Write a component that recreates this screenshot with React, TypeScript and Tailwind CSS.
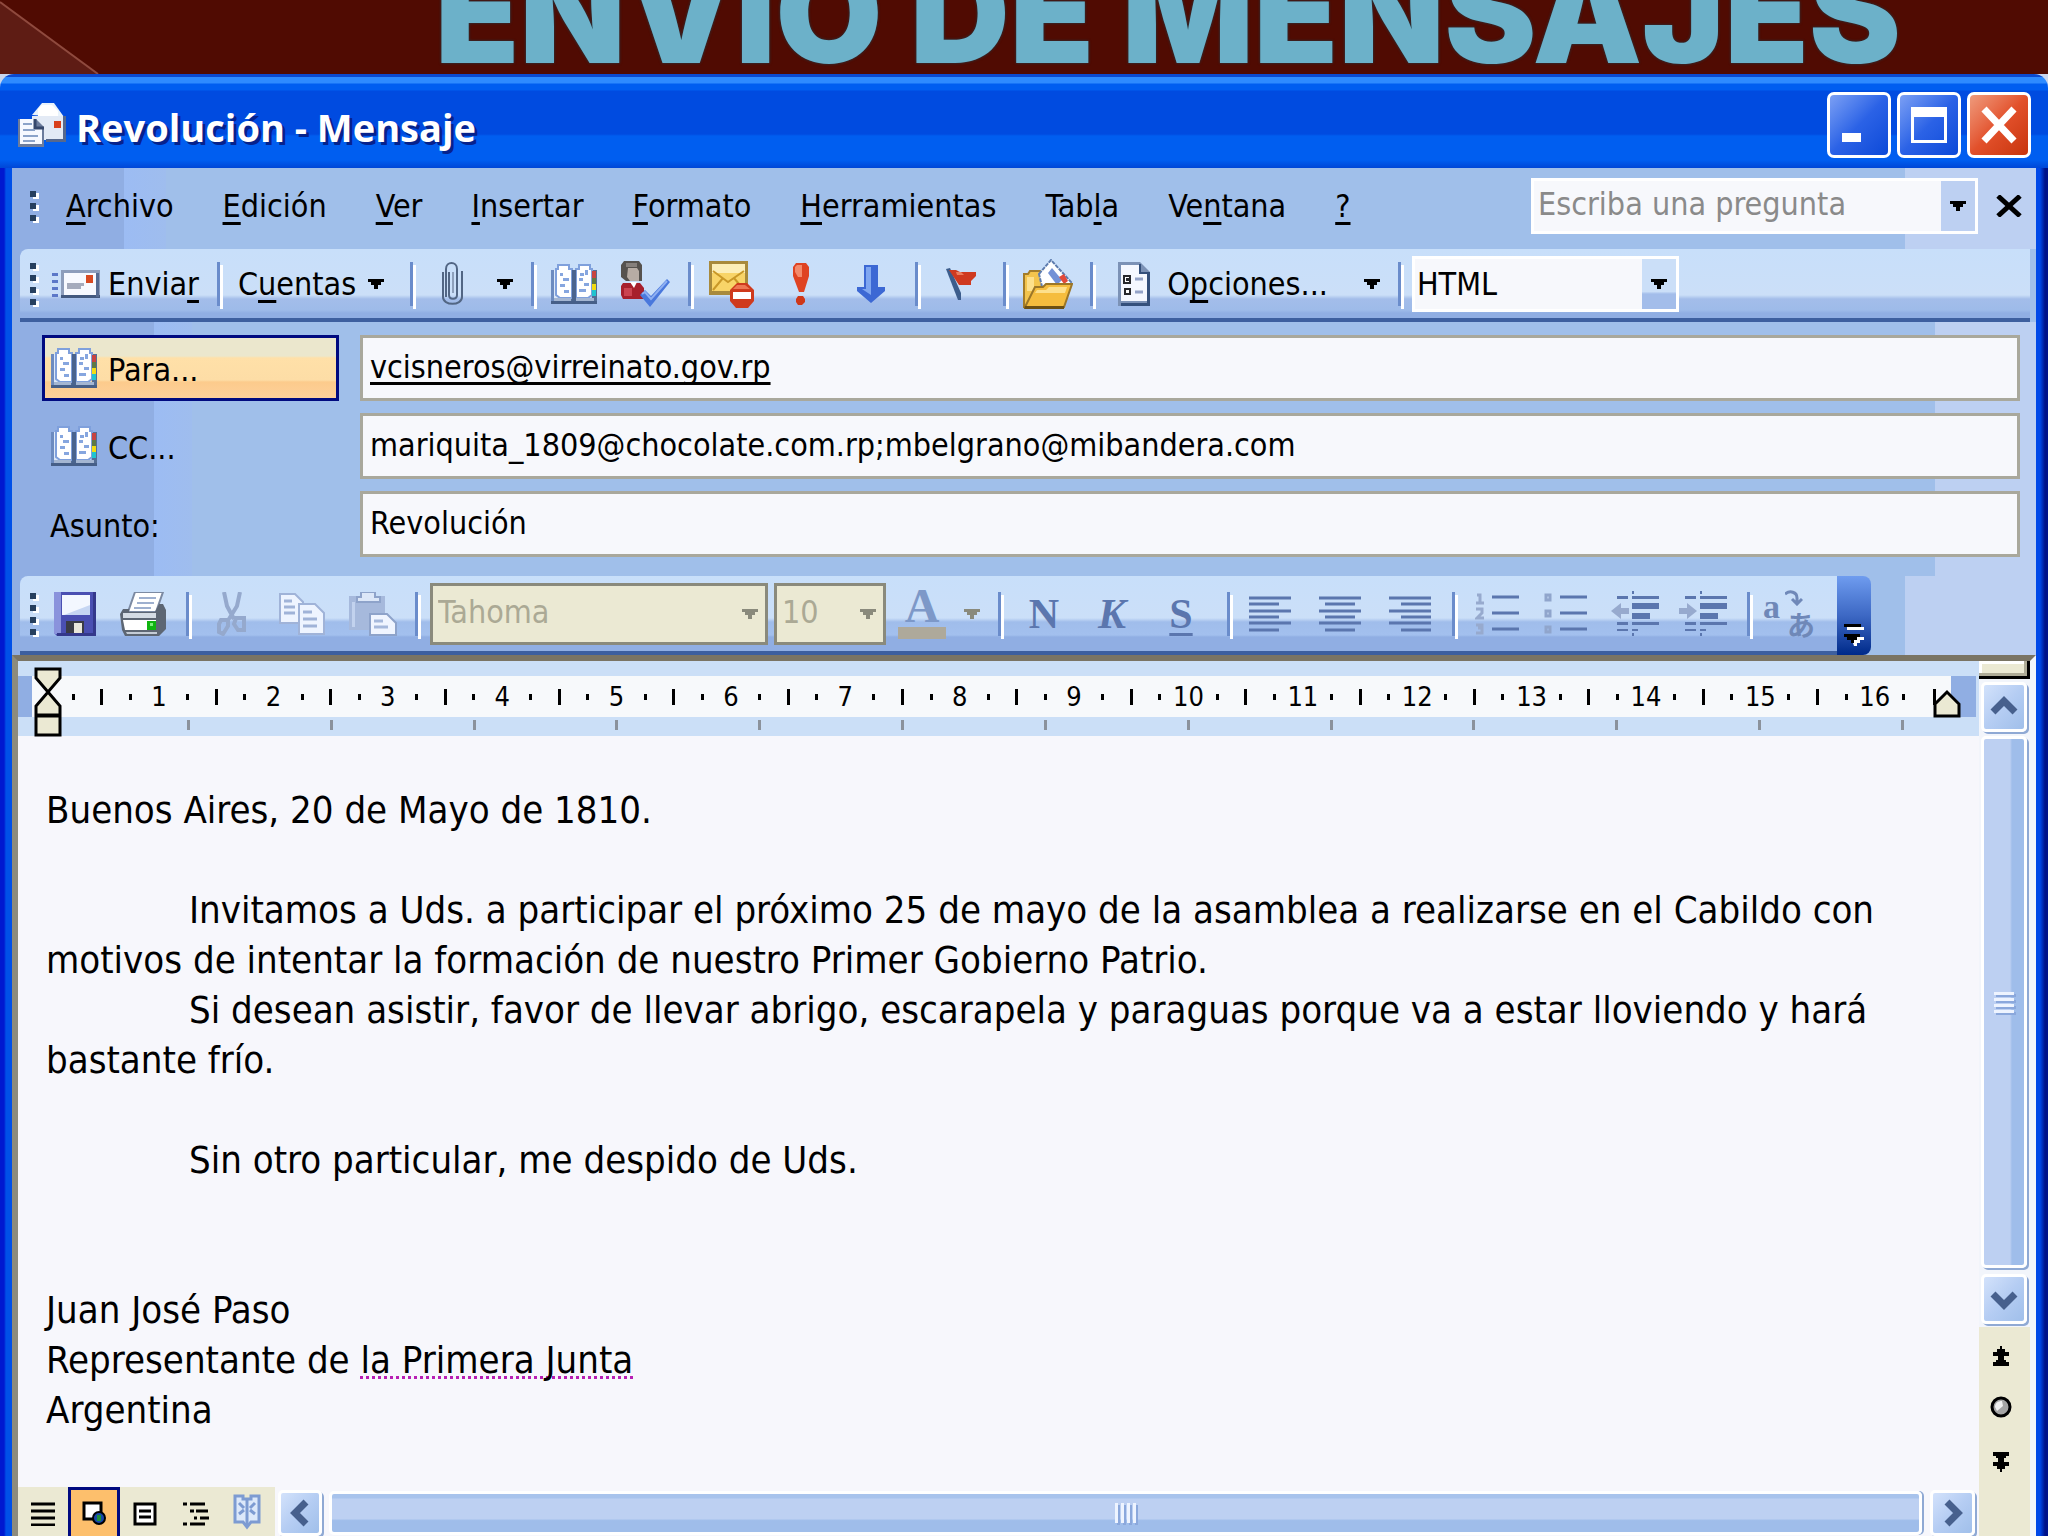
import type { ReactNode } from "react";

/** Outlook 2003 message window on top of a presentation slide */

const uiFont = "font-['DejaVu_Sans_Condensed','Noto_Sans',sans-serif]";

// ---------- small parts ----------

/** Mnemonic letter */
function M({ children }: { children: ReactNode }) {
  return (
    <span className="underline decoration-[3px] underline-offset-[5px] [text-decoration-skip-ink:none]">
      {children}
    </span>
  );
}

function Grip({ dots }: { dots: number }) {
  return (
    <div className="flex w-3 shrink-0 flex-col gap-[6px]">
      {Array.from({ length: dots }, (_, i) => (
        <span key={i} className="size-[6px] bg-[#27405f] shadow-[3px_2px_0_#fff]" />
      ))}
    </div>
  );
}

function Separator() {
  return <div className="h-[44px] w-[3px] shrink-0 bg-[#6a8ccb] shadow-[3px_3px_0_#fff]" />;
}

function Arrow({ className = "text-black" }: { className?: string }) {
  return (
    <svg viewBox="0 0 16 10" className={`h-[10px] w-4 shrink-0 ${className}`} fill="currentColor">
      <path d="M0 0h16v3h-3v3h-3v4H6V6H3V3H0z" />
    </svg>
  );
}

function IconButton({ label, className = "", children }: { label: string; className?: string; children: ReactNode }) {
  return (
    <button type="button" aria-label={label} className={`flex shrink-0 items-center justify-center ${className}`}>
      {children}
    </button>
  );
}

// ---------- icons ----------

function AppIcon() {
  return (
    <svg viewBox="0 0 48 48" className="size-12 shrink-0">
      <path d="M14 14 24 2h12l10 14z" fill="#e8f2fb" />
      <path d="M20 16V8l4-4h10l6 6v8z" fill="#fff" />
      <path d="M14 15h33v24H14z" fill="#e3eaf5" />
      <path d="M45 15h3v26H28v-3h17z" fill="#56688c" />
      <path d="M36 20h7v7h-7z" fill="#d8401c" />
      <path d="M0 18h18l8 8v20H0z" fill="#6c7c9c" />
      <path d="M2 18h15v9h7v16H2z" fill="#f6f9ff" />
      <path d="M17 18v9h9" fill="none" stroke="#35476b" strokeWidth="3" />
      <path d="M5 23h9M5 29h12M5 35h15M5 40h12" stroke="#8ba3c9" strokeWidth="2" />
    </svg>
  );
}

function SendIcon() {
  return (
    <svg viewBox="0 0 48 28" className="h-7 w-12 shrink-0">
      <path d="M0 3h6v3H0zM0 10h6v3H0zM0 17h6v3H0zM0 24h6v3H0z" fill="#5c78c8" />
      <path d="M9 0h39v28H9z" fill="#8d9dbb" />
      <path d="M12 25h36v3H9v-3z" fill="#43597f" />
      <path d="M12 3h32v22H12z" fill="#f7f9ff" />
      <path d="M44 3h3v24h-3z" fill="#566b92" />
      <path d="M34 5h7v8h-7z" fill="#d84a22" />
      <path d="M15 13h17v3h-3v3H15z" fill="#a5abbd" />
    </svg>
  );
}

function BookIcon() {
  return (
    <svg viewBox="0 0 46 40" className="h-10 w-[46px] shrink-0">
      <path d="M0 6h5v28h36V6h5v34H0z" fill="#546d94" />
      <path d="M2 6h38v28H2z" fill="#dce8f8" />
      <path d="M0 6h3v34H0z" fill="#6c8bc0" />
      <path d="M7 1h11v4h3v29H9l-4-3V5h2z" fill="#fff" stroke="#7fa0dc" strokeWidth="2" />
      <path d="M39 1H28v4h-3v29h12l4-3V5h-2z" fill="#fff" stroke="#7fa0dc" strokeWidth="2" />
      <path d="M21 6h4v32h-4z" fill="#4a648e" />
      <path d="M9 9h3v3H9zM12 14h6v3h-6zM9 20h5v3H9zM13 26h5v3h-5zM29 9h4v3h-4zM34 6h3v5h-3zM28 14h4v3h-4zM33 19h5v3h-5zM28 25h7v3h-7z" fill="#86a6df" />
      <path d="M41 7h4v7h-4z" fill="#c74340" />
      <path d="M41 14h4v6h-4z" fill="#5f7a44" />
      <path d="M41 20h4v6h-4z" fill="#f3dc12" />
      <path d="M41 26h4v6h-4z" fill="#20c4cf" />
      <path d="M3 34h17v3H3zM25 34h18v3H25z" fill="#a4b6d2" />
      <path d="M0 37h46v3H0z" fill="#465f88" />
    </svg>
  );
}

function ClipIcon() {
  return (
    <svg viewBox="0 0 24 44" className="h-11 w-6 shrink-0" fill="none" stroke="#526684" strokeWidth="2">
      <path d="M8 10v23c0 5 8 5 8 0V7c0-8-11-8-11 0v28" />
      <path d="M2 10v25c0 9 19 9 19 0V9" />
      <path d="M12 10v21" stroke="#8ea0bb" />
    </svg>
  );
}

function CheckNamesIcon() {
  return (
    <svg viewBox="0 0 50 46" className="h-[46px] w-[50px] shrink-0">
      <path d="M3 0h15l3 4v16H5L0 16V4z" fill="#56524e" />
      <path d="M7 7h9l2 3v10H9l-3-4z" fill="#b7aca4" />
      <path d="M5 2h11v4H5z" fill="#86807c" />
      <path d="M2 22h17l4 5v11H2l-2-4v-9z" fill="#a71f2c" />
      <path d="M9 21h7l-3 6z" fill="#fff" />
      <path d="M3 27h8v8H3z" fill="#cb4350" />
      <path d="m19 34 5-5 6 6L46 18l3 3-20 25z" fill="#4a78dc" />
      <path d="m21 33 3-2 6 7 16-18" fill="none" stroke="#8fb0f2" strokeWidth="2" />
    </svg>
  );
}

function MailDenyIcon() {
  return (
    <svg viewBox="0 0 46 48" className="h-12 w-[46px] shrink-0">
      <path d="M0 1h39v34H0z" fill="#a88a3c" />
      <path d="M3 4h33v27H3z" fill="#f8d468" />
      <path d="M3 4h33v9H3z" fill="#fceeb8" />
      <path d="m4 11 15 11 16-11M4 30l10-12M35 30 25 18" fill="none" stroke="#c99828" strokeWidth="2" />
      <path d="M28 23h10l7 7v11l-6 7H27l-6-7V30z" fill="#cf3a1d" />
      <path d="M28 25h8l5 4H24z" fill="#ee7653" />
      <path d="M24 32h18v7H24z" fill="#fff" />
    </svg>
  );
}

function ImportantIcon() {
  return (
    <svg viewBox="0 0 16 42" className="h-[42px] w-4 shrink-0">
      <path d="M3 0h10l3 4v9l-5 16H6L0 13V4z" fill="#df4322" />
      <path d="M4 2h5v12H5L2 9V4z" fill="#f38a6b" />
      <path d="M5 33h5l2 3v3l-3 3H5l-2-3v-3z" fill="#cf3718" />
    </svg>
  );
}

function LowIcon() {
  return (
    <svg viewBox="0 0 28 38" className="h-[38px] w-7 shrink-0">
      <path d="M7 0h14v22h7v4L14 38 0 26v-4h7z" fill="#3c68d4" />
      <path d="M9 2h5v28l-9-6h4z" fill="#7fa6f0" />
    </svg>
  );
}

function FlagIcon() {
  return (
    <svg viewBox="0 0 32 34" className="h-[34px] w-8 shrink-0">
      <path d="m1 2 4-1 11 25v7h-3z" fill="#3c5d8c" />
      <path d="M4 3h7l4 2h16v4l-5 5v4H14z" fill="#cf3a20" />
      <path d="M11 5h5l3 3h-7z" fill="#ee7d5c" />
    </svg>
  );
}

function FolderIcon() {
  return (
    <svg viewBox="0 0 50 50" className="size-[50px] shrink-0">
      <path d="M1 15h4l2-3h10l3 3v33H1z" fill="#f3c44d" stroke="#a37c29" strokeWidth="2" />
      <path d="M4 18h7v14H4z" fill="#fde08c" />
      <path d="M16 15 28 1l20 22-6 9H20z" fill="#fff" stroke="#5e7cae" strokeWidth="2" strokeDasharray="4 1" />
      <path d="m25 14 4-5 10 12-5 5z" fill="#7391d6" />
      <path d="m36 18 5-3 4 7-4 3z" fill="#e2493a" />
      <path d="M12 28h8l3-3h26l-8 23H2z" fill="#f5bd3e" stroke="#9b7628" strokeWidth="2" />
      <path d="M14 31h9l3-3h18l-2 6H12z" fill="#fde08c" />
      <path d="M2 47h39v3H1z" fill="#6c5013" />
    </svg>
  );
}

function OptionsIcon() {
  return (
    <svg viewBox="0 0 32 44" className="h-11 w-8 shrink-0">
      <path d="M0 0h22l10 10v34H0z" fill="#7c92b6" />
      <path d="M3 3h18v8h8v28H3z" fill="#f5f8ff" />
      <path d="M29 10h3v34H3v-3h26zM21 2h2v8h8v2H21z" fill="#34507b" />
      <path d="M6 14h6v7H6zM7 27h5v5H7z" fill="#fff" stroke="#27282c" strokeWidth="2" />
      <path d="M8 16h3v3H8z" fill="#27282c" />
      <path d="M17 17h8M17 30h8" stroke="#94a3c8" strokeWidth="3" />
    </svg>
  );
}

function SaveIcon() {
  return (
    <svg viewBox="0 0 42 44" className="h-11 w-[42px] shrink-0">
      <path d="M0 0h42v44H3l-3-3z" fill="#4a4fb2" />
      <path d="M0 0h7v42H0z" fill="#8a93dc" />
      <path d="M8 3h28v20H8z" fill="#f3f7ff" />
      <path d="M36 3v20H10l26-10z" fill="#c6d6f3" />
      <path d="M12 29h18v13H12z" fill="#3a3b45" />
      <path d="M20 31h8v10h-8z" fill="#e9e6da" />
      <path d="M39 0h3v44H3v-3h36z" fill="#34388b" />
    </svg>
  );
}

function PrintIcon() {
  return (
    <svg viewBox="0 0 46 44" className="h-11 w-[46px] shrink-0">
      <path d="M15 0h28l-7 20H8z" fill="#fff" stroke="#7c8aa2" strokeWidth="2" />
      <path d="M19 6h17M17 11h17M14 16h17" stroke="#9eb0cf" strokeWidth="2" />
      <path d="M3 17h6v3h26l4-8h4l3 6v19l-7 7H5l-3-6-2-16z" fill="#5d6673" />
      <path d="M3 21h33v5H3z" fill="#d5dce4" />
      <path d="M3 28h33v10H5z" fill="#fff" />
      <path d="M27 29h9v9h-9z" fill="#10b410" />
      <path d="M30 31h3v3h-3z" fill="#7df07a" />
      <path d="M6 40h31v2H7z" fill="#c4ccd6" />
    </svg>
  );
}

function CutIcon() {
  return (
    <svg viewBox="0 0 30 44" className="h-11 w-[30px] shrink-0" fill="none" stroke="#95a9cd" strokeWidth="3">
      <path d="m7 0 3 14 7 13M23 0l-3 14-8 13" strokeWidth="4" />
      <path d="M4 28h7v6l-5 8-4-2v-8zM19 26h8v12h-6l-4-6z" strokeWidth="4" />
    </svg>
  );
}

function CopyIcon() {
  return (
    <svg viewBox="0 0 46 42" className="h-[42px] w-[46px] shrink-0" fill="#eef4ff" stroke="#a0b3d8" strokeWidth="2">
      <path d="M1 1h15l8 8v21H1z" />
      <path d="M5 8h8M5 14h11M5 20h11" strokeWidth="3" />
      <path d="M20 11h16l9 9v21H20z" />
      <path d="M24 19h9M24 26h14M24 33h14" strokeWidth="3" />
    </svg>
  );
}

function PasteIcon() {
  return (
    <svg viewBox="0 0 48 44" className="h-11 w-12 shrink-0">
      <path d="M0 4h36v34H0z" fill="#a6b9dc" />
      <path d="M12 0h14v5h5v5H8V5h4z" fill="#dce7f8" stroke="#8ea3ca" strokeWidth="2" />
      <path d="M3 10h3v25H3z" fill="#c2d2ee" />
      <path d="M21 22h17l9 9v12H21z" fill="#f0f5ff" stroke="#8ea3ca" strokeWidth="2" />
      <path d="M25 29h9M25 35h14" stroke="#a6b9dc" strokeWidth="3" />
    </svg>
  );
}

function AlignIcon({ d }: { d: string }) {
  return (
    <svg viewBox="0 0 44 36" className="h-9 w-11 shrink-0" stroke="#5b76ae" strokeWidth="3">
      <path d={d} />
    </svg>
  );
}

function ListIcon({ numbered = false }: { numbered?: boolean }) {
  return (
    <svg viewBox="0 0 44 44" className="size-11 shrink-0" fill="none" stroke="#5b76ae" strokeWidth="3">
      <path d="M17 5h27M17 21h27M17 37h27" />
      {numbered ? (
        <path d="M2 3h3v8M1 11h8M1 17h6v4l-5 5h7M1 33h6v3H3h4v5H1" stroke="#97aace" strokeWidth="3" />
      ) : (
        <path d="M3 3h4v5H3zM3 19h4v5H3zM3 35h4v5H3z" stroke="#90a5cc" strokeWidth="3" />
      )}
    </svg>
  );
}

function IndentIcon({ right = false }: { right?: boolean }) {
  return (
    <svg viewBox="0 0 48 46" className="h-[46px] w-12 shrink-0" fill="#5b76ae">
      <path d="M21 5h27v3H21zM21 12h27v6H21zM21 22h18v6H21zM21 31h27v3H21zM21 38h6v2h-6z" />
      <path d="M6 5h11v3H6zM6 31h11v3H6zM6 38h11v2H6zM21 0h2v3h-2zM21 42h2v3h-2z" />
      {right ? (
        <path d="M0 17h8v-5l10 8-10 8v-5H0z" fill="#97aace" />
      ) : (
        <path d="M18 17h-8v-5L0 20l10 8v-5h8z" fill="#97aace" />
      )}
    </svg>
  );
}

function LanguageIcon() {
  return (
    <div className="relative h-12 w-12 shrink-0 text-[#6f88b8]">
      <span className="absolute -left-1 -top-1 font-['Liberation_Serif',serif] text-[34px] font-bold leading-[42px]">
        a
      </span>
      <span className="absolute bottom-0 right-0 font-['Noto_Sans_CJK_JP',sans-serif] text-[28px] font-bold leading-[28px]">
        あ
      </span>
      <svg viewBox="0 0 18 16" className="absolute right-3 top-0 h-4 w-[18px]" fill="none" stroke="currentColor" strokeWidth="3">
        <path d="M0 4c5-4 12-2 12 4v5M7 9l5 5 5-5" />
      </svg>
    </div>
  );
}

// ---------- title bar ----------

function CaptionButton({ label, close = false, children }: { label: string; close?: boolean; children: ReactNode }) {
  return (
    <button
      type="button"
      aria-label={label}
      className={`flex h-[66px] w-[64px] items-center justify-center rounded-[7px] border-[3px] border-white ${
        close
          ? "bg-linear-to-br from-[#ee9a7c] via-[#e2502a] to-[#c8340a]"
          : "bg-linear-to-br from-[#7c9ff4] via-[#2b62e6] to-[#0a49d8]"
      }`}
    >
      <svg viewBox="0 0 40 40" className="size-10">
        {children}
      </svg>
    </button>
  );
}

function TitleBar() {
  return (
    <header className="flex h-[94px] shrink-0 items-center rounded-t-[14px] bg-[linear-gradient(#0b49cf_0,#0b49cf_3px,#2e8bff_3px,#2e8bff_9px,#005ef0_10px,#005ef0_16px,#004be0_17px,#004be0_60px,#005ef0_62px,#005ef0_86px,#0046d6_94px)] pl-[18px] pr-[17px] pt-2">
      <AppIcon />
      <h1 className="ml-[10px] pt-1 font-['Open_Sans',sans-serif] text-[38px] font-bold leading-none text-white [text-shadow:3px_3px_0_#06228c]">
        Revolución - Mensaje
      </h1>
      <div className="ml-auto flex gap-[6px]">
        <CaptionButton label="Minimizar">
          <path d="M3 28h19v9H3z" fill="#fff" />
        </CaptionButton>
        <CaptionButton label="Maximizar">
          <path d="M2 2h36v36H2zM5 12v23h30V12z" fill="#fff" fillRule="evenodd" />
        </CaptionButton>
        <CaptionButton label="Cerrar" close>
          <path d="m5 4 30 32M35 4 5 36" stroke="#fff" strokeWidth="7" />
        </CaptionButton>
      </div>
    </header>
  );
}

// ---------- bars ----------

const menus: [string, string, string][] = [
  ["", "A", "rchivo"],
  ["", "E", "dición"],
  ["", "V", "er"],
  ["", "I", "nsertar"],
  ["", "F", "ormato"],
  ["", "H", "erramientas"],
  ["Tab", "l", "a"],
  ["Ve", "n", "tana"],
  ["", "?", ""],
];

function MenuBar() {
  return (
    <nav className="flex h-[81px] shrink-0 items-center bg-[linear-gradient(to_right,#90aee3_112px,#9cbcf3_112px,#9fbdee_154px,#a0bfea_154px,#a0bfea_1893px,#bdd0f2_1893px)] pb-[6px] pl-[18px] pr-[14px]">
      <Grip dots={3} />
      <ul className="ml-6 flex gap-[49px]">
        {menus.map(([before, key, after]) => (
          <li key={before + key + after}>
            <button type="button">
              {before}
              <M>{key}</M>
              {after}
            </button>
          </li>
        ))}
      </ul>
      <div className="ml-auto flex h-14 w-[447px] items-stretch border-[3px] border-white bg-[#f7f8fc]">
        <input
          aria-label="Escriba una pregunta"
          placeholder="Escriba una pregunta"
          className="min-w-0 flex-1 pb-1 pl-1 placeholder:text-[#8a8a8a] focus:outline-none"
        />
        <button type="button" aria-label="Preguntas recientes" className="flex w-[34px] items-center justify-center bg-[#bdd0f2]">
          <Arrow />
        </button>
      </div>
      <IconButton label="Cerrar mensaje" className="ml-[18px]">
        <svg viewBox="0 0 26 22" className="h-[22px] w-[26px]" stroke="#000" strokeWidth="5">
          <path d="m2 1 22 20M24 1 2 21" />
        </svg>
      </IconButton>
    </nav>
  );
}

function SendToolbar() {
  return (
    <div className="ml-2 shrink-0 pr-[6px]">
      <div
        role="toolbar"
        aria-label="Correo"
        className="flex h-[73px] items-center rounded-tl-lg border-b-4 border-[#3d5f9f] bg-[linear-gradient(#c8dffa_0,#cbdff8_46px,#a3bdea_50px,#9ebbe9_61px,#90aee3_64px)] pl-[10px]"
      >
        <Grip dots={4} />
        <button type="button" className="ml-[10px] flex items-center gap-2">
          <SendIcon />
          <span>
            Envia<M>r</M>
          </span>
        </button>
        <div className="ml-[18px]">
          <Separator />
        </div>
        <button type="button" className="ml-[18px] flex items-center gap-3">
          <span>
            C<M>u</M>entas
          </span>
          <Arrow />
        </button>
        <div className="ml-[26px] flex items-center gap-[28px]">
          <Separator />
          <button type="button" aria-label="Insertar archivo" className="flex items-center gap-8">
            <ClipIcon />
            <Arrow />
          </button>
        </div>
        <div className="ml-[18px] flex items-center">
          <Separator />
          <IconButton label="Libreta de direcciones" className="ml-[17px]">
            <BookIcon />
          </IconButton>
          <IconButton label="Comprobar nombres" className="ml-6">
            <CheckNamesIcon />
          </IconButton>
        </div>
        <div className="ml-[17px] flex items-center">
          <Separator />
          <IconButton label="Permisos" className="ml-[18px]">
            <MailDenyIcon />
          </IconButton>
          <IconButton label="Importancia alta" className="ml-[38px]">
            <ImportantIcon />
          </IconButton>
          <IconButton label="Importancia baja" className="ml-[48px]">
            <LowIcon />
          </IconButton>
        </div>
        <div className="ml-[30px] flex items-center">
          <Separator />
          <IconButton label="Marcar mensaje" className="ml-[27px]">
            <FlagIcon />
          </IconButton>
        </div>
        <div className="ml-[26px] flex items-center">
          <Separator />
          <IconButton label="Carpeta" className="ml-[17px]">
            <FolderIcon />
          </IconButton>
        </div>
        <div className="ml-[17px] flex items-center">
          <Separator />
          <button type="button" className="ml-[25px] flex items-center gap-[17px]">
            <OptionsIcon />
            <span>
              O<M>p</M>ciones...
            </span>
          </button>
          <IconButton label="Más opciones" className="ml-9">
            <Arrow />
          </IconButton>
        </div>
        <div className="ml-[18px] flex items-center gap-[11px]">
          <Separator />
          <div className="relative h-14 w-[267px]">
            <select
              aria-label="Formato del mensaje"
              className="size-full appearance-none border-[3px] border-white bg-[#f7f8fc] pl-[2px] focus:outline-none"
            >
              <option>HTML</option>
              <option>Texto sin formato</option>
            </select>
            <span className="pointer-events-none absolute inset-y-[3px] right-[3px] flex w-[34px] items-center justify-center bg-[linear-gradient(#cbdff8_65%,#a3bdea_70%)]">
              <Arrow />
            </span>
          </div>
        </div>
      </div>
    </div>
  );
}

const fieldClass =
  "h-[66px] min-w-0 flex-1 border-[3px] border-[#a9a89c] bg-[#f7f8fc] pl-[7px] pb-[2px] focus:outline-none";

function Fields() {
  return (
    <div className="flex shrink-0 flex-col gap-3 bg-[linear-gradient(to_right,#90aee3_142px,#9cbcf3_142px,#9fbdee_180px,#a0bfea_180px,#a0bfea_1923px,#bdd0f2_1923px)] pb-[19px] pl-[30px] pr-4 pt-[13px]">
      <div className="flex">
        <button
          type="button"
          className="mr-[21px] flex w-[297px] items-center gap-[11px] border-[3px] border-[#000a80] bg-[linear-gradient(#ebe7cd_18px,#ffe0a8_20px,#fddda6_42px,#fccb8c_44px,#fdd09a_60px)] pl-[6px]"
        >
          <BookIcon />
          <span className="pt-1">Para...</span>
        </button>
        <input
          aria-label="Para"
          defaultValue="vcisneros@virreinato.gov.rp"
          className={`${fieldClass} underline decoration-[3px] underline-offset-4 [text-decoration-skip-ink:none]`}
        />
      </div>
      <div className="flex">
        <button type="button" className="mr-[21px] flex w-[297px] items-center gap-[11px] pl-[9px]">
          <BookIcon />
          <span className="pt-1">CC...</span>
        </button>
        <input aria-label="CC" defaultValue="mariquita_1809@chocolate.com.rp;mbelgrano@mibandera.com" className={fieldClass} />
      </div>
      <div className="flex items-center">
        <label htmlFor="subject" className="mr-[21px] w-[297px] pl-2 pt-1">
          Asunto:
        </label>
        <input id="subject" defaultValue="Revolución" className={fieldClass} />
      </div>
    </div>
  );
}

function DisabledSelect({ label, value, className }: { label: string; value: string; className: string }) {
  return (
    <div className={`relative h-[62px] shrink-0 ${className}`}>
      <select
        aria-label={label}
        disabled
        className="size-full appearance-none border-[3px] border-[#8a8a7c] bg-[#ebe9d3] pb-1 pl-[5px] text-[#aba995] opacity-100"
      >
        <option>{value}</option>
      </select>
      <span className="pointer-events-none absolute inset-y-0 right-[10px] flex items-center">
        <Arrow className="text-[#8a8a7c]" />
      </span>
    </div>
  );
}

function FormatToolbar() {
  return (
    <div className="flex h-[79px] shrink-0 bg-[linear-gradient(to_right,#90aee3_112px,#a0bfea_112px,#a0bfea_1893px,#bdd0f2_1893px)] pl-2">
      <div
        role="toolbar"
        aria-label="Formato"
        className="flex items-center rounded-tl-lg border-b-4 border-[#3d5f9f] bg-[linear-gradient(#c8dffa_0,#cbdff8_42px,#a0bdeb_46px,#a3c0ee_59px,#90aee3_61px)] pl-[10px]"
      >
        <Grip dots={4} />
        <IconButton label="Guardar" className="ml-3">
          <SaveIcon />
        </IconButton>
        <IconButton label="Imprimir" className="ml-6">
          <PrintIcon />
        </IconButton>
        <div className="ml-5 flex items-center">
          <Separator />
          <IconButton label="Cortar" className="ml-[28px]">
            <CutIcon />
          </IconButton>
          <IconButton label="Copiar" className="ml-8">
            <CopyIcon />
          </IconButton>
          <IconButton label="Pegar" className="ml-6">
            <PasteIcon />
          </IconButton>
        </div>
        <div className="ml-[18px] flex items-center">
          <Separator />
          <DisabledSelect label="Fuente" value="Tahoma" className="ml-3 w-[338px]" />
          <DisabledSelect label="Tamaño de fuente" value="10" className="ml-[6px] w-[112px]" />
        </div>
        <IconButton label="Color de fuente" className="ml-3 gap-[18px]">
          <span className="w-12 border-b-[12px] border-[#aea99b] pb-1 text-center font-['Liberation_Serif',serif] text-[48px] font-bold leading-[34px] text-[#7d98c8]">
            A
          </span>
          <Arrow className="text-[#8a8a7c]" />
        </IconButton>
        <div className="ml-[18px] flex items-center font-['Liberation_Serif',serif] text-[42px] font-bold leading-[42px] text-[#5b76ae]">
          <Separator />
          <button type="button" aria-label="Negrita" className="ml-[26px] w-[34px]">
            N
          </button>
          <button type="button" aria-label="Cursiva" className="ml-8 w-[38px] italic">
            K
          </button>
          <button
            type="button"
            aria-label="Subrayado"
            className="ml-9 w-7 underline decoration-[3px] underline-offset-[5px]"
          >
            S
          </button>
        </div>
        <div className="ml-8 flex items-center gap-[26px]">
          <Separator />
          <IconButton label="Alinear a la izquierda" className="-ml-2">
            <AlignIcon d="M1 2h42M1 8h30M1 15h42M1 21h30M1 27h42M1 34h30" />
          </IconButton>
          <IconButton label="Centrar">
            <AlignIcon d="M1 2h42M7 8h30M1 15h42M7 21h30M1 27h42M7 34h30" />
          </IconButton>
          <IconButton label="Alinear a la derecha">
            <AlignIcon d="M1 2h42M13 8h30M1 15h42M13 21h30M1 27h42M13 34h30" />
          </IconButton>
        </div>
        <div className="ml-5 flex items-center gap-6">
          <Separator />
          <IconButton label="Numeración" className="-ml-1">
            <ListIcon numbered />
          </IconButton>
          <IconButton label="Viñetas">
            <ListIcon />
          </IconButton>
          <IconButton label="Reducir sangría">
            <IndentIcon />
          </IconButton>
          <IconButton label="Aumentar sangría" className="-ml-1">
            <IndentIcon right />
          </IconButton>
        </div>
        <div className="ml-5 flex items-center gap-[17px] pr-[22px]">
          <Separator />
          <IconButton label="Idioma">
            <LanguageIcon />
          </IconButton>
        </div>
      </div>
      <button
        type="button"
        aria-label="Opciones de barra de herramientas"
        className="flex w-[34px] items-end justify-center rounded-r-lg bg-linear-to-b from-[#6f9cef] via-[#3d68c4] to-[#00298a] pb-[9px]"
      >
        <svg viewBox="0 0 20 22" className="h-[22px] w-5">
          <path d="M3 3h17v3H3zM7 13h13v3h-4v3h-3v3h-3z" fill="#fff" />
          <path d="M0 0h17v3H0zM0 10h16v3h-3v3h-3v3H7v-3H3v-3H0z" fill="#000" />
        </svg>
      </button>
    </div>
  );
}

// ---------- ruler ----------

const centimeters = Array.from({ length: 16 }, (_, i) => i + 1);

function Ruler() {
  return (
    <div className="relative h-[75px] shrink-0 bg-[#cbdff7] pr-[3px] pt-[15px]">
      <div className="flex h-[41px] items-center border-l-[14px] border-r-[25px] border-[#90aee3] bg-[#f7f9fb] pl-[27px] text-[27px] leading-none">
        <div className="flex flex-1">
          {centimeters.map((n) => (
            <div key={n} className="grid flex-1 grid-cols-4 items-center justify-items-center">
              <span className="h-[6px] w-[3px] bg-black" />
              <span className="h-4 w-[3px] bg-black" />
              <span className="h-[6px] w-[3px] bg-black" />
              <span>{n}</span>
            </div>
          ))}
        </div>
        <div className="flex w-[62px] items-center gap-7 pl-[13px]">
          <span className="h-[6px] w-[3px] bg-black" />
          <span className="h-4 w-[3px] bg-black" />
        </div>
      </div>
      {/* default tab stops */}
      <div className="mr-[72px] flex pl-[29px] pt-[3px]">
        {Array.from({ length: 13 }, (_, i) => (
          <span key={i} className="h-[10px] flex-1 border-r-[3px] border-[#8b929c]" />
        ))}
      </div>
      <svg viewBox="0 0 28 70" className="absolute left-4 top-[6px] h-[70px] w-7" fill="#ebe9d3" stroke="#000" strokeWidth="3">
        <path d="M2 2h24v9L14 25 2 11zM14 25l12 14v9H2v-9zM2 49h24v19H2z" />
      </svg>
      <svg viewBox="0 0 28 30" className="absolute right-[18px] top-[28px] h-[30px] w-7" fill="#ebe9d3" stroke="#000" strokeWidth="3">
        <path d="M2 15 14 3l12 12v12H2z" />
      </svg>
    </div>
  );
}

// ---------- message ----------

function Message() {
  return (
    <div
      role="textbox"
      aria-multiline
      aria-label="Mensaje"
      contentEditable
      suppressContentEditableWarning
      spellCheck={false}
      className="min-h-0 flex-1 overflow-hidden bg-[#f7f7fc] pl-7 pt-[49px] text-[38px] leading-[50px] focus:outline-none"
    >
      <p>Buenos Aires, 20 de Mayo de 1810.</p>
      <br />
      <p className="indent-[143px]">
        Invitamos a Uds. a participar el próximo 25 de mayo de la asamblea a realizarse en el Cabildo con
        <br />
        motivos de intentar la formación de nuestro Primer Gobierno Patrio.
      </p>
      <p className="indent-[143px]">
        Si desean asistir, favor de llevar abrigo, escarapela y paraguas porque va a estar lloviendo y hará
        <br />
        bastante frío.
      </p>
      <br />
      <p className="indent-[143px]">Sin otro particular, me despido de Uds.</p>
      <br />
      <br />
      <p>Juan José Paso</p>
      <p>
        Representante de{" "}
        <span className="underline decoration-[#b81fb4] decoration-dotted decoration-[3px] underline-offset-[3px] [text-decoration-skip-ink:none]">
          la Primera Junta
        </span>
      </p>
      <p>Argentina</p>
    </div>
  );
}

// ---------- scroll bars ----------

function ScrollButton({ label, d, className }: { label: string; d: string; className: string }) {
  return (
    <button
      type="button"
      aria-label={label}
      className={`flex shrink-0 items-center justify-center rounded-[5px] border-[3px] border-white bg-linear-to-br from-[#d3e2fb] via-[#b5cdf3] to-[#a0bfea] shadow-[2px_2px_0_#8fa9d4] ${className}`}
    >
      <svg viewBox="0 0 28 28" className="size-7" fill="none" stroke="#47608d" strokeWidth="7">
        <path d={d} />
      </svg>
    </button>
  );
}

function VerticalScroll() {
  return (
    <div className="flex w-[51px] shrink-0 flex-col bg-[#f2f5fb]">
      <div className="h-[18px] shrink-0 border-b-[3px] border-r-[3px] border-black bg-[#ebe9d3] shadow-[inset_-3px_-3px_0_#aeab97,inset_3px_3px_0_#fff]" />
      <ScrollButton label="Subir" d="m3 19 11-11 11 11" className="ml-[2px] mt-[3px] h-[50px] w-[46px]" />
      <div className="ml-[2px] mt-1 flex w-[46px] flex-1 flex-col items-center justify-center gap-[3px] rounded-[5px] border-[3px] border-white bg-[linear-gradient(to_right,#bdd0f2_65%,#9fbdea_70%)] shadow-[2px_2px_0_#8fa9d4]">
        {[0, 1, 2, 3].map((i) => (
          <span key={i} className="h-[3px] w-5 bg-[#eef4ff] shadow-[2px_2px_0_#8ba8dc]" />
        ))}
      </div>
      <ScrollButton label="Bajar" d="m3 9 11 11L25 9" className="ml-[2px] mt-[6px] h-[50px] w-[46px]" />
      <div className="mt-[3px] flex h-[209px] shrink-0 flex-col items-center bg-[#ebe9d3] pr-[7px] pt-[19px]">
        <IconButton label="Anterior">
          <svg viewBox="0 0 16 20" className="h-5 w-4">
            <path d="M7 0h2v3h3v3h4v4h-5v4h2v2h3v4H0v-4h3v-2h2v-4H0V6h4V3h3z" />
          </svg>
        </IconButton>
        <IconButton label="Seleccionar objeto" className="mt-[30px]">
          <svg viewBox="0 0 22 22" className="size-[22px]">
            <circle cx="11" cy="11" r="9" fill="#a5a5a5" stroke="#000" strokeWidth="3" />
            <path d="M5 11c0-4 3-6 7-6l1 5-6 5z" fill="#f0f0f0" />
          </svg>
        </IconButton>
        <IconButton label="Siguiente" className="mt-[34px]">
          <svg viewBox="0 0 16 20" className="h-5 w-4 rotate-180">
            <path d="M7 0h2v3h3v3h4v4h-5v4h2v2h3v4H0v-4h3v-2h2v-4H0V6h4V3h3z" />
          </svg>
        </IconButton>
      </div>
    </div>
  );
}

function BottomBar() {
  return (
    <div className="flex h-[49px] shrink-0 bg-[#f7f7fc]">
      <div className="flex w-[257px] shrink-0 bg-[#ebe9d3]">
        <IconButton label="Vista normal" className="w-[50px] pt-1">
          <svg viewBox="0 0 24 24" className="size-6" stroke="#000" strokeWidth="3">
            <path d="M0 2h24M0 9h24M0 16h24M0 23h24" />
          </svg>
        </IconButton>
        <IconButton label="Vista diseño Web" className="w-[52px] border-[3px] border-b-0 border-[#000a80] bg-[#fdbf6c]">
          <svg viewBox="0 0 24 24" className="size-6">
            <path d="M2 2h17v16H2z" fill="#fff" stroke="#000" strokeWidth="3" />
            <circle cx="17" cy="17" r="6" fill="#1747a8" stroke="#000" strokeWidth="2" />
            <path d="M15 14h4v6h-4z" fill="#1f8f3a" />
          </svg>
        </IconButton>
        <IconButton label="Diseño de impresión" className="w-[50px] pt-1">
          <svg viewBox="0 0 24 24" className="size-6" fill="#fff" stroke="#000" strokeWidth="3">
            <path d="M2 2h20v20H2zM6 9h12M6 15h12" />
          </svg>
        </IconButton>
        <IconButton label="Esquema" className="w-[52px] pt-1">
          <svg viewBox="0 0 26 24" className="h-6 w-[26px]" stroke="#000" strokeWidth="3">
            <path d="M0 2h4M7 2h15M7 9h4M13 9h12M11 16h3M17 16h9M0 22h4M7 22h15" />
          </svg>
        </IconButton>
        <IconButton label="Diseño de lectura" className="w-[50px]">
          <svg viewBox="0 0 28 36" className="h-9 w-7" fill="#dce8fa" stroke="#7d9bd2" strokeWidth="3">
            <path d="M2 2h8v3h8V2h8v26h-8l-4 5-4-5H2z" />
            <path d="M14 5v28M6 9l5 5M6 20l5-4M22 9l-5 5M22 20l-5-4" />
          </svg>
        </IconButton>
      </div>
      <ScrollButton label="Izquierda" d="M20 3 9 14l11 11" className="ml-[3px] mt-[3px] h-[46px] w-[44px]" />
      <div className="ml-[7px] mr-[8px] mt-[4px] flex h-[44px] flex-1 items-center justify-center gap-[3px] rounded-[5px] border-[3px] border-white bg-[linear-gradient(#a8c3ec_4px,#bdd0f2_5px,#bdd0f2_65%,#9fbdea_70%)] shadow-[2px_0_0_#8fa9d4]">
        {[0, 1, 2, 3].map((i) => (
          <span key={i} className="h-5 w-[3px] bg-[#eef4ff] shadow-[2px_2px_0_#8ba8dc]" />
        ))}
      </div>
      <ScrollButton label="Derecha" d="m8 3 11 11L8 25" className="mr-1 mt-[3px] h-[46px] w-[45px]" />
    </div>
  );
}

// ---------- page ----------

export default function App() {
  return (
    <div className={`flex h-screen flex-col overflow-hidden bg-[#500b02] text-[32px] leading-10 text-black ${uiFont}`}>
      <div className="relative flex h-[74px] shrink-0 items-end justify-center pb-3 pl-[288px]">
        <svg viewBox="0 0 100 74" className="absolute left-0 top-0 h-[74px] w-[100px]">
          <path d="M0 2v72h98z" fill="#5e1c14" />
          <path d="m0 2 98 72" stroke="#8f4a3e" strokeWidth="2" />
        </svg>
        <h2 className="whitespace-nowrap font-['Inter',sans-serif] text-[138px] font-black leading-[98px] text-[#6cb1c9] [text-shadow:0_0_3px_#1b3f4c]">
          ENVIO DE MENSAJES
        </h2>
      </div>
      <main className="flex min-h-0 flex-1 flex-col bg-[#c9d6ee]">
        <TitleBar />
        <div className="flex min-h-0 flex-1 flex-col bg-[linear-gradient(to_right,#0018d0_4px,#0050e8_6px,#0050e8_50%,#0048e8_calc(100%-8px),#00128a_calc(100%-3px))] px-3">
          <MenuBar />
          <div className="shrink-0 bg-[linear-gradient(to_right,#90aee3_124px,#a0bfea_124px)]">
            <SendToolbar />
          </div>
          <Fields />
          <FormatToolbar />
          <div className="flex min-h-0 flex-1 border-l-[6px] border-r-[6px] border-t-[6px] border-l-[#8d8b7d] border-r-[#f2f5fb] border-t-[#7a7464]">
            <div className="flex min-w-0 flex-1 flex-col">
              <Ruler />
              <Message />
              <BottomBar />
            </div>
            <VerticalScroll />
          </div>
        </div>
      </main>
    </div>
  );
}
